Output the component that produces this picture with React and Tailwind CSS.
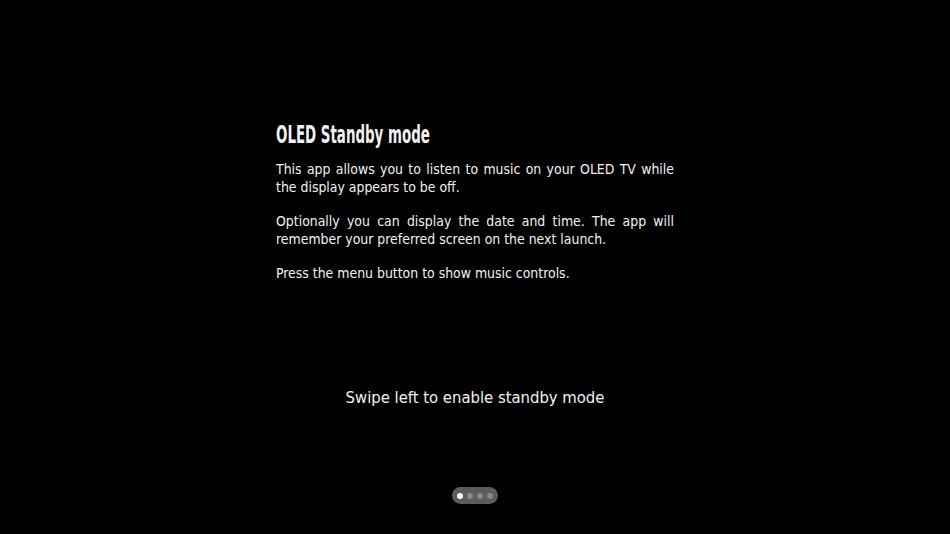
export default function App() {
  return (
    <div className="flex h-[534px] w-[950px] flex-col items-center bg-black text-[#f2f2f2]" style={{ fontFamily: '"DejaVu Sans Condensed", "Liberation Sans", sans-serif' }}>
      <section className="mt-[119px] w-[398px]">
        <h1 className="origin-left scale-x-[0.62] whitespace-nowrap text-[24px] font-bold leading-[32px]">OLED Standby mode</h1>
        <div className="mt-[9px] text-justify text-[13.9px] leading-[18px]">
          <p>This app allows you to listen to music on your OLED TV while the display appears to be off.</p>
          <p className="mt-[16px]">Optionally you can display the date and time. The app will remember your preferred screen on the next launch.</p>
          <p className="mt-[16px]">Press the menu button to show music controls.</p>
        </div>
      </section>
      <p className="mt-[104px] text-[16.5px] leading-[24px]">Swipe left to enable standby mode</p>
      <div className="mt-[77px] flex h-[17px] w-[46px] items-center justify-center gap-[4px] rounded-full bg-[#5c5c5c]">
        <span className="h-[6px] w-[6px] rounded-full bg-white" />
        <span className="h-[6px] w-[6px] rounded-full bg-[#8a8a8a]" />
        <span className="h-[6px] w-[6px] rounded-full bg-[#8a8a8a]" />
        <span className="h-[6px] w-[6px] rounded-full bg-[#8a8a8a]" />
      </div>
    </div>
  );
}
